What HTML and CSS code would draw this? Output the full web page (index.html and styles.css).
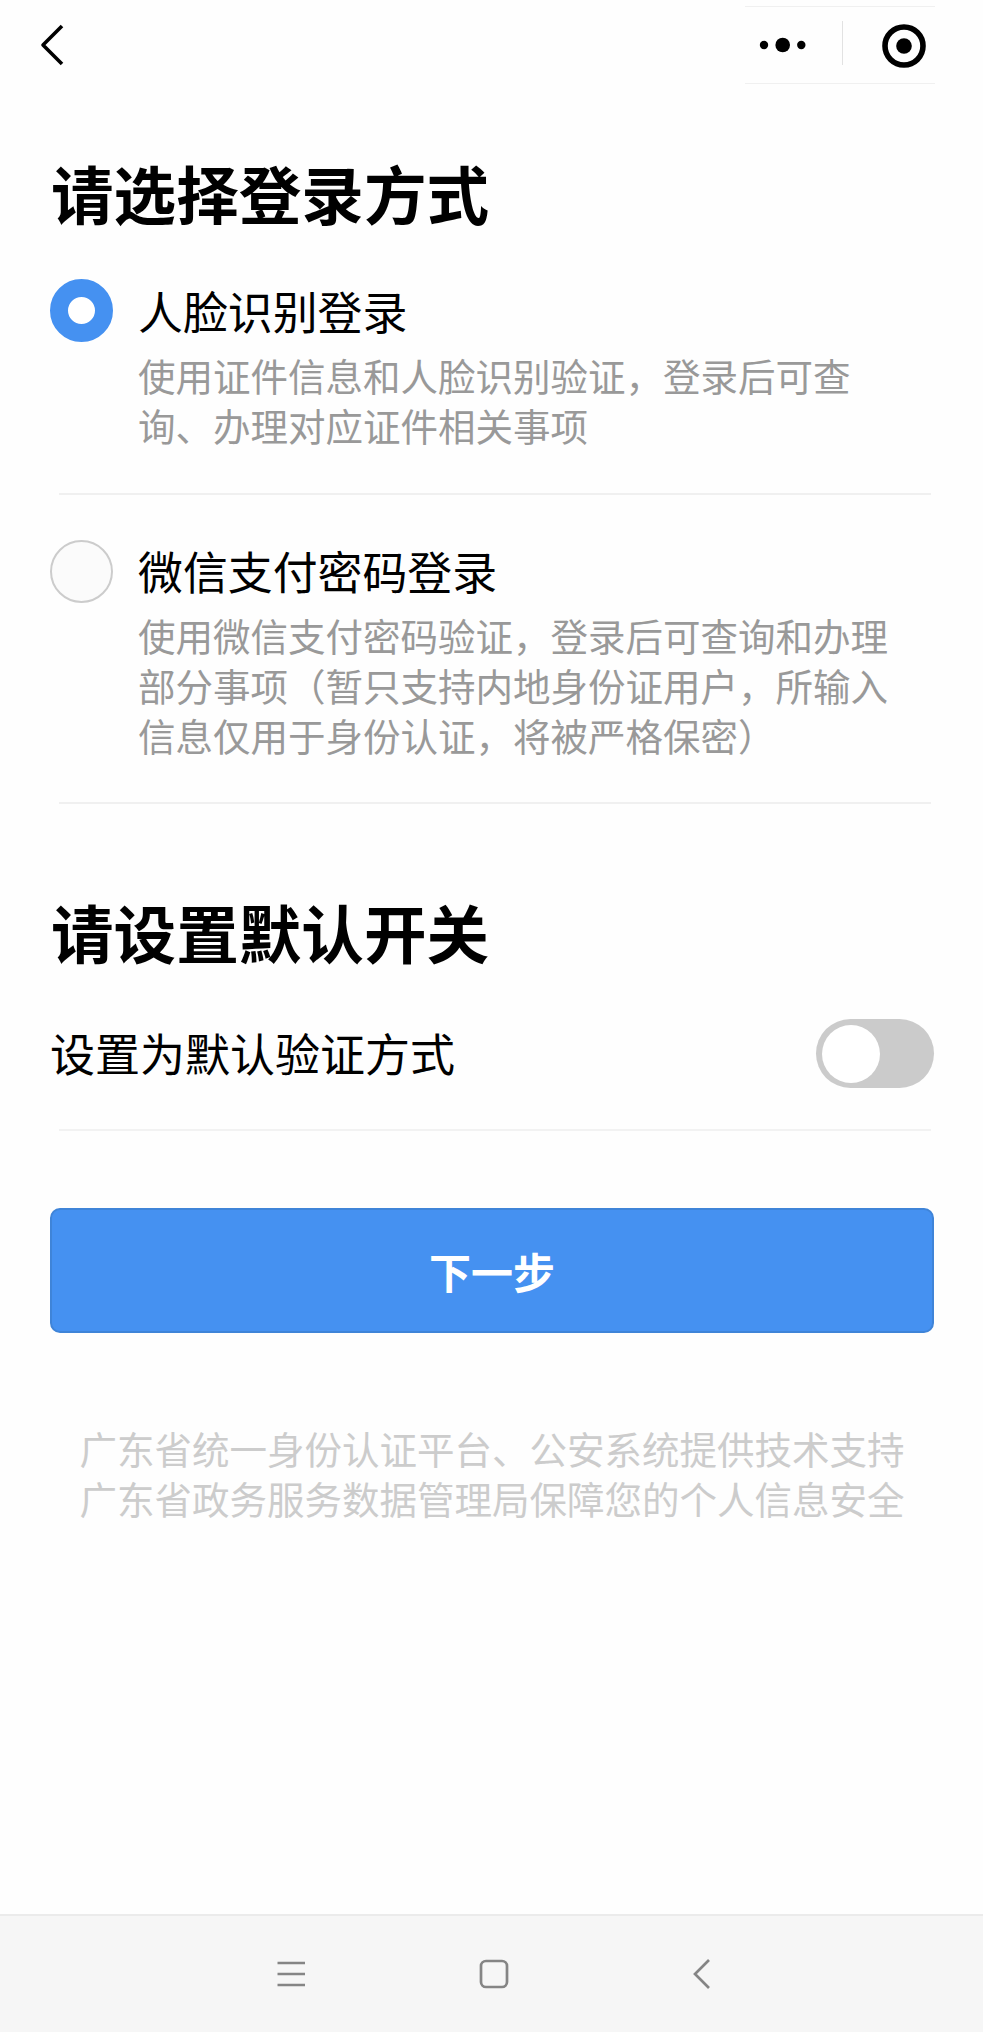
FILE: index.html
```html
<!DOCTYPE html>
<html lang="zh-CN">
<head>
    <meta charset="UTF-8">
    <title>请选择登录方式</title>
    <link rel="stylesheet" href="styles.css">
</head>
<body>
    <header class="top-bar">
        <svg class="back" width="30" height="48" viewBox="0 0 30 48">
            <path d="M24 5 L5 24 L24 43" fill="none" stroke="#000" stroke-width="3.6" stroke-linejoin="round"/>
        </svg>
        <div class="capsule">
            <svg class="dots" width="50" height="20" viewBox="0 0 50 20">
                <circle cx="6" cy="10" r="4.2"/>
                <circle cx="24.7" cy="10" r="7.3"/>
                <circle cx="43.3" cy="10" r="4.2"/>
            </svg>
            <span class="capsule-line"></span>
            <svg class="target" width="46" height="46" viewBox="0 0 46 46">
                <circle cx="23" cy="23" r="19" fill="none" stroke="#000" stroke-width="5.6"/>
                <circle cx="23" cy="23" r="7.8"/>
            </svg>
        </div>
    </header>

    <main class="content">
        <h1>请选择登录方式</h1>

        <div class="option">
            <span class="radio checked"></span>
            <div class="option-text">
                <h2>人脸识别登录</h2>
                <p>使用证件信息和人脸识别验证，登录后可查询、办理对应证件相关事项</p>
            </div>
        </div>

        <div class="option">
            <span class="radio"></span>
            <div class="option-text">
                <h2>微信支付密码登录</h2>
                <p>使用微信支付密码验证，登录后可查询和办理部分事项（暂只支持内地身份证用户，所输入信息仅用于身份认证，将被严格保密）</p>
            </div>
        </div>

        <h1 class="second">请设置默认开关</h1>
        <div class="switch-row">
            <span class="switch-label">设置为默认验证方式</span>
            <span class="switch"><span class="knob"></span></span>
        </div>

        <button class="next">下一步</button>

        <p class="support">广东省统一身份认证平台、公安系统提供技术支持<br>广东省政务服务数据管理局保障您的个人信息安全</p>
    </main>

    <footer class="nav-bar">
        <svg width="32" height="32" viewBox="0 0 32 32">
            <path d="M2.5 5 H30 M2.5 16 H30 M2.5 27 H30"/>
        </svg>
        <svg width="32" height="32" viewBox="0 0 32 32">
            <rect x="3" y="3" width="26" height="26" rx="5"/>
        </svg>
        <svg width="32" height="32" viewBox="0 0 32 32">
            <path d="M28 2 L14 16 L28 30"/>
        </svg>
    </footer>
</body>
</html>
```
FILE: styles.css
```css
* {
    box-sizing: border-box;
}

body {
    margin: 0;
    height: 2032px;
    display: flex;
    flex-direction: column;
    background-color: #fefefe;
    color: #000;
    font-family: "Noto Sans CJK SC", sans-serif;
}

h1, h2, p {
    margin: 0;
}

/* top bar */
.top-bar {
    display: flex;
    justify-content: space-between;
    height: 90px;
    padding: 6px 48px 0 38px;
}

.back {
    margin-top: 15px;
}

.capsule {
    display: flex;
    align-items: center;
    width: 190px;
    height: 78px;
    border-top: 1px solid #f0f0f0;
    border-bottom: 1px solid #f0f0f0;
}

.dots {
    margin-left: 13px;
}

.capsule-line {
    width: 1px;
    height: 44px;
    margin: 0 38px 4px 34px;
    background-color: #e2e2e2;
}

.target {
    flex-shrink: 0;
    margin-top: 2px;
}

/* content */
.content {
    flex: 1;
    padding: 62px 49px 0 50px;
}

h1 {
    padding-left: 1px;
    font-size: 62.6px;
    line-height: 80px;
    font-weight: bold;
    margin-bottom: 47px;
}

.option {
    display: flex;
    gap: 25px;
    padding-bottom: 45px;
    margin-bottom: 45px;
    background: linear-gradient(#f0f0f0, #f0f0f0) no-repeat 9px 100% / 872px 2px;
}

.option + .option {
    padding-bottom: 44px;
}

.radio {
    flex-shrink: 0;
    width: 63px;
    height: 63px;
    border: 2px solid #ccc;
    border-radius: 50%;
    background-color: #fbfbfb;
}

.radio.checked {
    border: 18.5px solid #4591f1;
    background-color: #fff;
}

.option-text {
    width: 752px;
    padding-top: 6px;
}

.checked + .option-text {
    padding-top: 7px;
}

h2 {
    font-size: 44.9px;
    line-height: 50px;
    font-weight: normal;
    margin-bottom: 14px;
}

.option p {
    font-size: 37.5px;
    line-height: 50px;
    color: #999;
}

h1.second {
    margin: 87px 0 48px;
}

.switch-row {
    display: flex;
    justify-content: space-between;
    height: 112px;
    font-size: 45px;
    line-height: 65px;
    background: linear-gradient(#f2f2f2, #f2f2f2) no-repeat 9px 100% / 872px 2px;
}

.switch-label {
    padding-top: 1px;
}

.switch {
    width: 118px;
    height: 69px;
    padding: 5.5px;
    border-radius: 35px;
    background-color: #cbcbcb;
}

.knob {
    display: block;
    width: 58px;
    height: 58px;
    border-radius: 50%;
    background-color: #fff;
}

.next {
    display: block;
    width: 100%;
    height: 125px;
    margin-top: 77px;
    border: 2px solid #3f84d8;
    border-radius: 10px;
    background-color: #4591f1;
    color: #fff;
    font-family: inherit;
    font-size: 42px;
    font-weight: bold;
}

.support {
    margin-top: 90px;
    font-size: 37.5px;
    line-height: 50px;
    text-align: center;
    white-space: nowrap;
    color: #ccc;
}

/* system navigation */
.nav-bar {
    display: flex;
    gap: 171px;
    height: 118px;
    padding: 42px 0 0 275px;
    border-top: 2px solid #ebebeb;
    background-color: #f6f6f6;
}

.nav-bar svg {
    fill: none;
    stroke: #858585;
    stroke-width: 2.7;
}
```
